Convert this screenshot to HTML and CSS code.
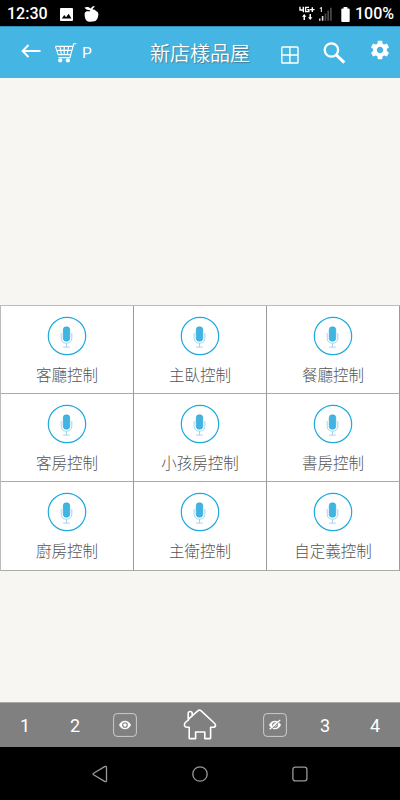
FILE: index.html
```
<!DOCTYPE html>
<html lang="zh-TW">
<head>
<meta charset="utf-8">
<title>新店樣品屋</title>
<link rel="stylesheet" href="styles.css">
</head>
<body>
<svg class="defs" width="0" height="0">
    <symbol id="mic" viewBox="0 0 40 40">
        <circle cx="20" cy="20" r="18.7" fill="#fff" stroke="#1eaadc" stroke-width="1.2"/>
        <rect x="16.2" y="10.8" width="6.6" height="14.4" rx="3" fill="#42b4e2" stroke="#2a9fd0" stroke-width=".5"/>
        <path d="M14.2 17v5.5c0 6.3 10.6 6.3 10.6 0V17M19.5 27.3v3.8M16.1 31.1h6.8" fill="none" stroke="#8accea" stroke-width=".8"/>
    </symbol>
</svg>
<div class="status">
    <span class="clock">12:30</span>
    <svg class="photo" width="13" height="13" viewBox="0 0 13 13">
        <path fill="#fff" d="M1 0h11q1 0 1 1v11q0 1-1 1H1q-1 0-1-1V1q0-1 1-1z"/>
        <path d="M1.8 10.4l2.5-3.3 1.8 2.1 2.5-3.4 2.9 4.6z"/>
    </svg>
    <svg class="apple" width="15" height="16" viewBox="0 0 15 16">
        <path fill="#fff" d="M1 6.5C2 5 4 5.200 5.500 5.500L6.300 4.200C4 4.400 1.500 3.600.6 1.600c2-1 4.700-.8 6.200 1C7.500 1 8.800.2 10.200 0l.5.8C9.500 1.500 8.800 2.300 8.400 3.200c1.600.1 2.900.7 3.500 1.800 2.300.6 2.800 2.700 2.300 5-.4 2.200-1.400 4-2.700 5-1.300.6-2.300.2-3.500.5-1.600.3-2.500.2-4-.1-1.500-.5-2.600-2-3-4C.6 9.500.4 7.800 1 6.500z"/>
    </svg>
    <svg class="network" width="16" height="16" viewBox="0 0 16 16">
        <path d="M1 .7V4h3.6M4.3.7v5.6M10 1.4H6.6v4.2h3.3V3.7H8.3M11 3.6h4.6M13.3 1.3v4.6" fill="none" stroke="#fff" stroke-width="1.4"/>
        <path d="M3 10.8l2.2-2.7 2.2 2.7H6V14H4.500v-3.200zM9 11.300l2.200 2.700 2.200-2.700H12V8.100h-1.500v3.200z" fill="#fff"/>
    </svg>
    <svg class="signal" width="14" height="14" viewBox="0 0 14 14">
        <path d="M.8 1.600L2.400.5v4.400" fill="none" stroke="#ddd" stroke-width="1.100"/>
        <path d="M.7 11.500v2.300M3.600 9v4.800" stroke="#ddd" stroke-width="1.600"/>
        <path d="M6.500 6.500v7.300M9.200 3.600v10.200M11.900.8v13" stroke="#464646" stroke-width="1.800"/>
    </svg>
    <svg class="battery" width="9" height="15" viewBox="0 0 9 15">
        <path fill="#fff" d="M2.600 0h3.800v1.500h1.300q1 0 1 1V14q0 1-1 1H1.300q-1 0-1-1V2.500q0-1 1-1h1.300z"/>
    </svg>
    <span class="percent">100%</span>
</div>
<div class="header">
    <svg class="back" width="20" height="14" viewBox="0 0 20 14">
        <path d="M19.500 7H1.800M7.500 1L1.600 7l5.900 6" fill="none" stroke="#fff" stroke-width="1.900"/>
    </svg>
    <svg class="cart" width="22" height="20" viewBox="0 0 22 20">
        <path d="M.3 3.400h17.300M21.500.8h-2.800L15 14.600H3.500M.5 3.600l2.700 8h12.500M1.800 7.400h14.800M5 3.500l1.400 8M9.200 3.500v8M13.600 3.500l-1.400 8" fill="none" stroke="#fff" stroke-width="1.100"/>
        <circle cx="5.200" cy="17.400" r="2.100" fill="#fff"/>
        <circle cx="12.900" cy="17.400" r="2.100" fill="#fff"/>
    </svg>
    <span class="mode">P</span>
    <h1 class="title">新店樣品屋</h1>
    <svg class="layout" width="18" height="18" viewBox="0 0 18 18">
        <path d="M1.600 1h14.600q.8 0 .8.800v14.400q0 .8-.8.800H1.600q-.8 0-.8-.8V1.800q0-.8.8-.8zM8.900 1v16M.8 9H17" fill="none" stroke="#fff" stroke-width="1.400"/>
    </svg>
    <svg class="search" width="23" height="22" viewBox="0 0 23 22">
        <circle cx="8.400" cy="8" r="6.700" fill="none" stroke="#fff" stroke-width="2.300"/>
        <path d="M13.300 13l8 7.700" stroke="#fff" stroke-width="3"/>
    </svg>
    <svg class="gear" width="22" height="22" viewBox="0 0 24 24">
        <path fill="#fff" d="M19.430 12.980c.04-.32.07-.64.07-.98s-.03-.66-.07-.98l2.110-1.650c.19-.15.24-.42.12-.64l-2-3.460c-.12-.22-.39-.3-.61-.22l-2.490 1c-.52-.4-1.080-.73-1.690-.98l-.38-2.650C14.460 2.180 14.250 2 14 2h-4c-.25 0-.46.18-.49.42l-.38 2.650c-.61.25-1.170.59-1.690.98l-2.490-1c-.23-.09-.49 0-.61.22l-2 3.460c-.13.22-.07.49.12.64l2.110 1.650c-.04.32-.07.65-.07.98s.03.66.07.98l-2.110 1.650c-.19.15-.24.42-.12.64l2 3.460c.12.22.39.3.61.22l2.490-1c.52.4 1.080.73 1.690.98l.38 2.650c.03.24.24.42.49.42h4c.25 0 .46-.18.49-.42l.38-2.650c.61-.25 1.170-.59 1.690-.98l2.490 1c.23.09.49 0 .61-.22l2-3.460c.12-.22.07-.49-.12-.64l-2.110-1.650zM12 15.500c-1.930 0-3.500-1.570-3.500-3.500s1.570-3.500 3.500-3.500 3.500 1.570 3.500 3.500-1.570 3.500-3.500 3.500z"/>
    </svg>
</div>
<div class="main">
    <div class="rooms">
        <div class="room"><svg class="mic"><use href="#mic"/></svg><span>客廳控制</span></div>
        <div class="room"><svg class="mic"><use href="#mic"/></svg><span>主臥控制</span></div>
        <div class="room"><svg class="mic"><use href="#mic"/></svg><span>餐廳控制</span></div>
        <div class="room"><svg class="mic"><use href="#mic"/></svg><span>客房控制</span></div>
        <div class="room"><svg class="mic"><use href="#mic"/></svg><span>小孩房控制</span></div>
        <div class="room"><svg class="mic"><use href="#mic"/></svg><span>書房控制</span></div>
        <div class="room"><svg class="mic"><use href="#mic"/></svg><span>廚房控制</span></div>
        <div class="room"><svg class="mic"><use href="#mic"/></svg><span>主衛控制</span></div>
        <div class="room"><svg class="mic"><use href="#mic"/></svg><span>自定義控制</span></div>
    </div>
</div>
<div class="tabs">
    <span class="tab">1</span>
    <span class="tab">2</span>
    <span class="tab">
        <svg width="24" height="24" viewBox="0 0 24 24">
            <rect x=".6" y=".6" width="22.800" height="22.800" rx="3.500" fill="none" stroke="#ccc" stroke-width="1"/>
            <path d="M6 12c2.600-5.700 9.400-5.700 12 0-2.600 5.700-9.400 5.700-12 0z" fill="#fff"/>
            <circle cx="12" cy="12" r="2.300" fill="#fff" stroke="#808080" stroke-width="1.100"/>
        </svg>
    </span>
    <span class="tab home">
        <svg width="34" height="32" viewBox="0 0 34 32">
            <path d="M5.200 10.300V4.500q0-2 2-2t2 2v2.200M5.200 10.300L14.800 1.900q1.700-1.400 3.400 0L31.200 14q2 2.200 1 3.400-.8.900-2 .9h-2.600v10.700q0 .6-.6.600h-5.200V23h-9.200v6.600H6.900q-.7 0-.7-.7V18.300H3.500q-3-1-1.600-4.300l4.300-3.900" fill="none" stroke="#fff" stroke-width="1.600" stroke-linejoin="round"/>
        </svg>
    </span>
    <span class="tab">
        <svg width="24" height="24" viewBox="0 0 24 24">
            <rect x=".6" y=".6" width="22.800" height="22.800" rx="3.500" fill="none" stroke="#ccc" stroke-width="1"/>
            <path d="M6 12c2.600-5.700 9.400-5.700 12 0-2.600 5.700-9.400 5.700-12 0z" fill="#fff"/>
            <circle cx="12" cy="12" r="2.300" fill="#fff" stroke="#808080" stroke-width="1.100"/>
            <path d="M7.400 16.900L16.900 8.500" stroke="#808080" stroke-width="1"/>
            <path d="M6.600 16.300L17.200 7" stroke="#fff" stroke-width="1.200"/>
        </svg>
    </span>
    <span class="tab">3</span>
    <span class="tab">4</span>
</div>
<div class="navbar">
    <svg width="16" height="18" viewBox="0 0 16 18">
        <path d="M1.600 8.200L12.600 1.600q1.900-.8 1.900 1v12.800q0 1.800-1.900 1L1.600 9.800q-1-.8 0-1.600z" fill="none" stroke="#999" stroke-width="1.300"/>
    </svg>
    <svg width="16" height="16" viewBox="0 0 16 16">
        <circle cx="8" cy="8" r="7.200" fill="none" stroke="#999" stroke-width="1.300"/>
    </svg>
    <svg width="16" height="16" viewBox="0 0 16 16">
        <rect x=".9" y="1.100" width="14" height="13.800" rx="2.300" fill="none" stroke="#999" stroke-width="1.300"/>
    </svg>
</div>
</body>
</html>
```
FILE: styles.css
```
* {
    box-sizing: border-box;
}
body {
    margin: 0;
    height: 800px;
    display: flex;
    flex-direction: column;
    overflow: hidden;
    font-family: Roboto, "Noto Sans CJK TC", sans-serif;
    background-color: #f7f6f2;
}
svg {
    display: block;
    flex: none;
}
.defs {
    display: none;
}
.status {
    flex: none;
    display: flex;
    align-items: center;
    height: 26px;
    padding: 2px 7px 0 7px;
    color: #fff;
    background-color: #000;
    font-size: 16px;
    font-weight: 500;
    line-height: 24px;
}
.clock {
    width: 53px;
}
.apple {
    margin-left: 11px;
}
.network {
    margin-left: auto;
}
.signal {
    margin-left: 4px;
}
.battery {
    margin-left: 8px;
}
.percent {
    width: 38px;
    margin-left: 5px;
}
.header {
    flex: none;
    display: flex;
    align-items: center;
    height: 52px;
    padding: 0 9px 0 21px;
    color: #fff;
    background-color: #45b5e3;
    border-top: 1px solid #2f8fb5;
}
.back {
    margin-top: -4px;
}
.cart {
    margin-left: 14px;
}
.mode {
    width: 68px;
    margin-left: 5px;
    font-size: 15.5px;
}
.title {
    width: 100px;
    margin: 2px 0 0;
    font-size: 20px;
    font-weight: 350;
    line-height: 30px;
    white-space: nowrap;
    text-shadow: 1px 1px 1px #4c7c91;
}
.layout {
    margin: 5px 0 0 31px;
}
.search {
    margin-left: 24px;
}
.gear {
    margin: -5px 0 0 auto;
}
.main {
    flex: 1;
    padding-top: 227px;
}
.rooms {
    display: grid;
    grid-template-columns: repeat(3, 1fr);
    grid-auto-rows: 88.2px;
    border-top: 1px solid #bbb;
    border-left: 1px solid #bbb;
}
.room {
    display: flex;
    flex-direction: column;
    align-items: center;
    padding-top: 10px;
    background-color: #fff;
    border-right: 1px solid #999;
    border-bottom: 1px solid #aaa;
    color: #555;
    font-size: 15.5px;
    font-weight: 300;
    line-height: 24px;
}
.mic {
    width: 40px;
    height: 40px;
    margin-bottom: 8px;
}
.tabs {
    flex: none;
    display: grid;
    grid-template-columns: repeat(2, 50px) 50px 100px repeat(3, 50px);
    height: 45px;
    color: #fff;
    background-color: #808080;
    border-top: 1px solid #aaa;
}
.tab {
    display: flex;
    align-items: center;
    justify-content: center;
    font-size: 18px;
}
.navbar {
    flex: none;
    display: flex;
    align-items: center;
    justify-content: center;
    gap: 84px;
    height: 53px;
    background-color: #000;
}
```
